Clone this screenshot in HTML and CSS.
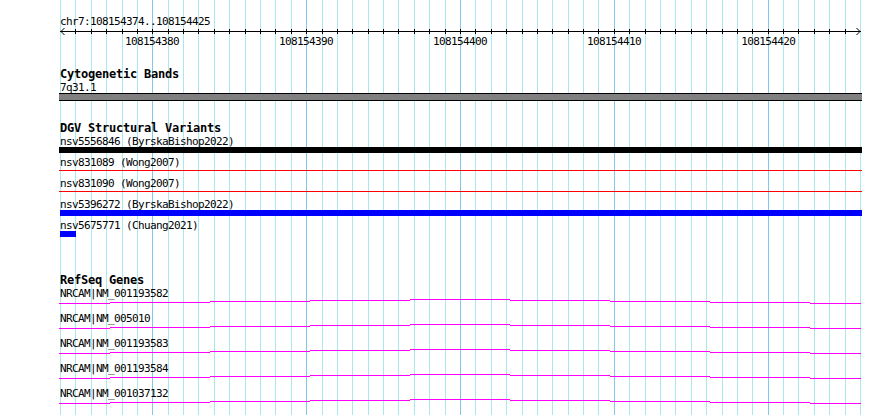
FILE: index.html
```html
<!DOCTYPE html>
<html>
<head>
<meta charset="utf-8">
<title>chr7:108154374..108154425</title>
<link rel="stylesheet" href="styles.css">
</head>
<body>
<div class="view">
  <svg class="grid" width="890" height="415" viewBox="0 0 890 415" shape-rendering="crispEdges">
    <path class="grid-minor" d="M60.5 0V415M75.5 0V415M91.5 0V415M106.5 0V415M122.5 0V415M137.5 0V415M168.5 0V415M183.5 0V415M198.5 0V415M214.5 0V415M229.5 0V415M245.5 0V415M260.5 0V415M275.5 0V415M291.5 0V415M322.5 0V415M337.5 0V415M352.5 0V415M368.5 0V415M383.5 0V415M398.5 0V415M414.5 0V415M429.5 0V415M445.5 0V415M475.5 0V415M491.5 0V415M506.5 0V415M522.5 0V415M537.5 0V415M552.5 0V415M568.5 0V415M583.5 0V415M598.5 0V415M629.5 0V415M645.5 0V415M660.5 0V415M675.5 0V415M691.5 0V415M706.5 0V415M722.5 0V415M737.5 0V415M752.5 0V415M783.5 0V415M798.5 0V415M814.5 0V415M829.5 0V415M845.5 0V415M860.5 0V415"/>
    <path class="grid-major" d="M152.5 0V415M306.5 0V415M460.5 0V415M614.5 0V415M768.5 0V415"/>
  </svg>

  <div class="content">
    <div class="locus">chr7:108154374..108154425</div>
    <svg class="ruler" width="802" height="9" viewBox="59 26 802 9" shape-rendering="crispEdges">
      <path class="ruler-line" d="M60 31.5H861"/>
      <path class="ruler-line" d="M75.5 29V34M91.5 29V34M106.5 29V34M122.5 29V34M137.5 29V34M152.5 29V34M168.5 29V34M183.5 29V34M198.5 29V34M214.5 29V34M229.5 29V34M245.5 29V34M260.5 29V34M275.5 29V34M291.5 29V34M306.5 29V34M322.5 29V34M337.5 29V34M352.5 29V34M368.5 29V34M383.5 29V34M398.5 29V34M414.5 29V34M429.5 29V34M445.5 29V34M460.5 29V34M475.5 29V34M491.5 29V34M506.5 29V34M522.5 29V34M537.5 29V34M552.5 29V34M568.5 29V34M583.5 29V34M598.5 29V34M614.5 29V34M629.5 29V34M645.5 29V34M660.5 29V34M675.5 29V34M691.5 29V34M706.5 29V34M722.5 29V34M737.5 29V34M752.5 29V34M768.5 29V34M783.5 29V34M798.5 29V34M814.5 29V34M829.5 29V34M845.5 29V34"/>
      <polyline class="ruler-arrow" points="64.5,28 61,31.5 64.5,35" shape-rendering="auto"/>
      <polyline class="ruler-arrow" points="856.5,28 860,31.5 856.5,35" shape-rendering="auto"/>
    </svg>
    <div class="ruler-labels">
      <span>108154380</span>
      <span>108154390</span>
      <span>108154400</span>
      <span>108154410</span>
      <span>108154420</span>
    </div>

    <section class="track track-cyto">
      <h2 class="track-title">Cytogenetic Bands</h2>
      <div class="label">7q31.1</div>
      <div class="band"></div>
    </section>

    <section class="track track-dgv">
      <h2 class="track-title">DGV Structural Variants</h2>
      <div class="sv-row">
        <div class="label">nsv5556846 (ByrskaBishop2022)</div>
        <div class="sv-area"><div class="sv-bar sv-black"></div></div>
      </div>
      <div class="sv-row">
        <div class="label">nsv831089 (Wong2007)</div>
        <div class="sv-area"><div class="sv-line sv-red"></div></div>
      </div>
      <div class="sv-row">
        <div class="label">nsv831090 (Wong2007)</div>
        <div class="sv-area"><div class="sv-line sv-red"></div></div>
      </div>
      <div class="sv-row">
        <div class="label">nsv5396272 (ByrskaBishop2022)</div>
        <div class="sv-area"><div class="sv-bar sv-blue"></div></div>
      </div>
      <div class="sv-row">
        <div class="label">nsv5675771 (Chuang2021)</div>
        <div class="sv-area"><div class="sv-bar sv-blue sv-short"></div></div>
      </div>
    </section>

    <section class="track track-genes">
      <h2 class="track-title">RefSeq Genes</h2>
      <div class="gene-row">
        <div class="label">NRCAM|NM_001193582</div>
        <svg class="intron" width="802" height="13" viewBox="59 0 802 13" shape-rendering="crispEdges"><path d="M59 5.5H110M110 4.5H210M210 3.5H310M310 2.5H410M410 1.5H510M510 2.5H610M610 3.5H710M710 4.5H810M810 5.5H861"/></svg>
      </div>
      <div class="gene-row">
        <div class="label">NRCAM|NM_005010</div>
        <svg class="intron" width="802" height="13" viewBox="59 0 802 13" shape-rendering="crispEdges"><path d="M59 5.5H110M110 4.5H210M210 3.5H310M310 2.5H410M410 1.5H510M510 2.5H610M610 3.5H710M710 4.5H810M810 5.5H861"/></svg>
      </div>
      <div class="gene-row">
        <div class="label">NRCAM|NM_001193583</div>
        <svg class="intron" width="802" height="13" viewBox="59 0 802 13" shape-rendering="crispEdges"><path d="M59 5.5H110M110 4.5H210M210 3.5H310M310 2.5H410M410 1.5H510M510 2.5H610M610 3.5H710M710 4.5H810M810 5.5H861"/></svg>
      </div>
      <div class="gene-row">
        <div class="label">NRCAM|NM_001193584</div>
        <svg class="intron" width="802" height="13" viewBox="59 0 802 13" shape-rendering="crispEdges"><path d="M59 5.5H110M110 4.5H210M210 3.5H310M310 2.5H410M410 1.5H510M510 2.5H610M610 3.5H710M710 4.5H810M810 5.5H861"/></svg>
      </div>
      <div class="gene-row">
        <div class="label">NRCAM|NM_001037132</div>
        <svg class="intron" width="802" height="13" viewBox="59 0 802 13" shape-rendering="crispEdges"><path d="M59 5.5H110M110 4.5H210M210 3.5H310M310 2.5H410M410 1.5H510M510 2.5H610M610 3.5H710M710 4.5H810M810 5.5H861"/></svg>
      </div>
    </section>
  </div>
</div>
</body>
</html>
```

FILE: styles.css
```css
html, body {
  margin: 0;
  padding: 0;
  background: #ffffff;
}

.view {
  position: relative;
  width: 890px;
  height: 415px;
  overflow: hidden;
  background: #ffffff;
  font-family: "DejaVu Sans Mono", "Liberation Mono", monospace;
  font-size: 11px;
  letter-spacing: -0.62px;
  line-height: 15px;
  color: #000000;
}

.grid {
  position: absolute;
  left: 0;
  top: 0;
  z-index: 0;
}

.grid-minor {
  stroke: #a8e8ee;
  stroke-width: 1;
  fill: none;
}

.grid-major {
  stroke: #82c8ee;
  stroke-width: 1;
  fill: none;
}

.content {
  position: relative;
  z-index: 1;
  padding: 14px 0 0 60px;
}

.locus {
  height: 12px;
  white-space: nowrap;
}

.ruler {
  display: block;
  margin-left: -1px;
}

.ruler-line {
  stroke: #000000;
  stroke-width: 1;
  fill: none;
}

.ruler-arrow {
  stroke: #000000;
  stroke-width: 1;
  fill: none;
}

.ruler-labels {
  display: flex;
  gap: 100px;
  padding-left: 65px;
  height: 12px;
  line-height: 14px;
  white-space: nowrap;
}

.track {
  margin: 0;
}

.track-title {
  margin: 20px 0 0 0;
  height: 13px;
  font-size: 12px;
  letter-spacing: -0.22px;
  line-height: 15px;
  font-weight: bold;
  white-space: nowrap;
}

.track-genes .track-title {
  margin-top: 34px;
}

.label {
  height: 12px;
  white-space: nowrap;
}

.band {
  margin: 1px 0 0 -1px;
  width: 803px;
  height: 6px;
  background: #808080;
  border-top: 1px solid #000000;
  border-bottom: 1px solid #000000;
}

.sv-row {
  height: 21px;
}

.sv-area {
  height: 9px;
}

.sv-bar {
  margin: 1px 0 0 -1px;
  width: 803px;
  height: 6px;
}

.sv-line {
  margin: 3px 0 0 -1px;
  width: 803px;
  height: 1px;
}

.sv-black { background: #000000; }
.sv-red { background: #ff0000; }
.sv-blue { background: #0000ff; }

.sv-blue {
  margin-left: 0;
  width: 802px;
}

.sv-short {
  width: 16px;
}

.gene-row {
  height: 25px;
}

.intron {
  display: block;
  margin-left: -1px;
}

.intron path {
  stroke: #ff00ff;
  stroke-width: 1;
  fill: none;
}
```
